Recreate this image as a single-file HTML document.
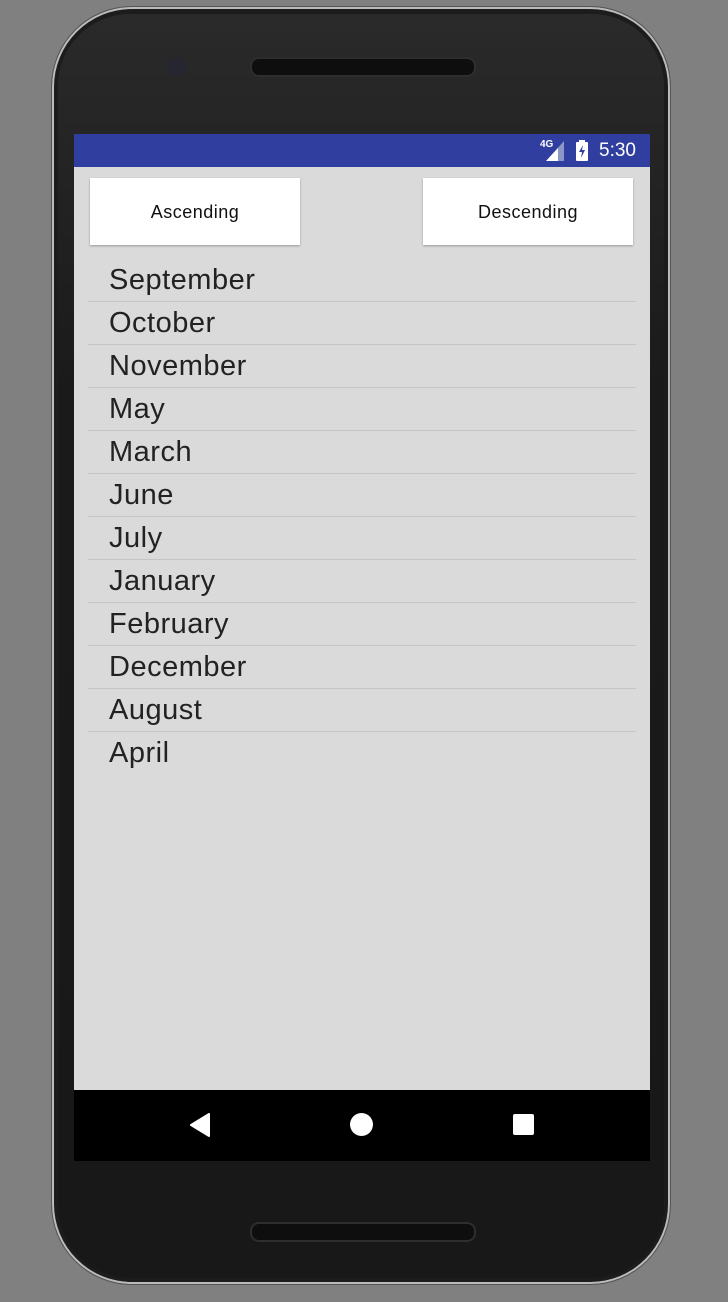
<!DOCTYPE html>
<html><head><style>
body{margin:0;width:728px;height:1302px;background:#808080;position:relative;overflow:hidden;font-family:"Liberation Sans",sans-serif}
.phone{position:absolute;left:52px;top:7px;width:618px;height:1277px;border-radius:80px;background:#1c1c1c;box-shadow:0 0 0 2px #bbb inset,0 0 0 1px #555}
.in{position:absolute;left:58px;top:14px;width:606px;height:1264px;border-radius:72px;background:linear-gradient(#2a2a2a,#1a1a1a 30%,#181818)}
.spk{position:absolute;left:250px;width:222px;height:16px;border-radius:9px;background:#0e0e0e;border:2px solid #2e2e2e}
.screen{position:absolute;left:74px;top:134px;width:576px;height:1027px;background:#dadada}
.sb{height:33px;background:#303f9f;color:#fff;position:relative}
.btn{position:absolute;top:44px;width:210px;height:67px;background:#fff;box-shadow:0 1px 2px rgba(0,0,0,.3);font-size:18px;letter-spacing:0.5px;text-align:center;line-height:68px;color:#111}
.row{position:absolute;left:14px;width:548px;height:43px;border-bottom:1px solid #c4c4c4;font-size:29px;letter-spacing:0.5px;color:#222;line-height:43px;padding-left:21px;box-sizing:border-box}
.nav{position:absolute;left:0;top:956px;width:576px;height:71px;background:#000}
</style></head><body>
<div class="phone"></div>
<div class="in"></div>
<div style="position:absolute;left:167px;top:57px;width:20px;height:20px;border-radius:50%;background:#262630"></div>
<div class="spk" style="top:57px"></div>
<div class="spk" style="top:1222px"></div>
<div class="screen">
<div class="sb">
<span style="position:absolute;left:466px;top:5px;font-size:10px;font-weight:bold">4G</span>
<svg style="position:absolute;left:472px;top:7px" width="18" height="20"><polygon points="18,0 18,20 0,20" fill="#8d96c9"/><polygon points="12,7 12,20 0,20" fill="#fff"/></svg>
<svg style="position:absolute;left:502px;top:6px" width="12" height="21"><rect x="0" y="2" width="12" height="19" rx="1" fill="#fff"/><rect x="3" y="0" width="6" height="3" fill="#fff"/><polygon points="7,5 3,12 6,12 5,18 9,10 6,10" fill="#303f9f"/></svg>
<span style="position:absolute;left:525px;top:6px;font-size:19px">5:30</span>
</div>
<div class="btn" style="left:16px">Ascending</div>
<div class="btn" style="left:349px">Descending</div>
<div class="row" style="top:125px">September</div>
<div class="row" style="top:168px">October</div>
<div class="row" style="top:211px">November</div>
<div class="row" style="top:254px">May</div>
<div class="row" style="top:297px">March</div>
<div class="row" style="top:340px">June</div>
<div class="row" style="top:383px">July</div>
<div class="row" style="top:426px">January</div>
<div class="row" style="top:469px">February</div>
<div class="row" style="top:512px">December</div>
<div class="row" style="top:555px">August</div>
<div class="row" style="top:598px;border:none">April</div>
<div class="nav">
<svg style="position:absolute;left:116px;top:23px" width="20" height="24"><polygon points="19,1 19,23 1,12" fill="#fff" stroke="#fff" stroke-linejoin="round" stroke-width="2"/></svg>
<div style="position:absolute;left:276px;top:23px;width:23px;height:23px;border-radius:50%;background:#fff"></div>
<div style="position:absolute;left:439px;top:24px;width:21px;height:21px;border-radius:2px;background:#fff"></div>
</div>
</div>
</body></html>
